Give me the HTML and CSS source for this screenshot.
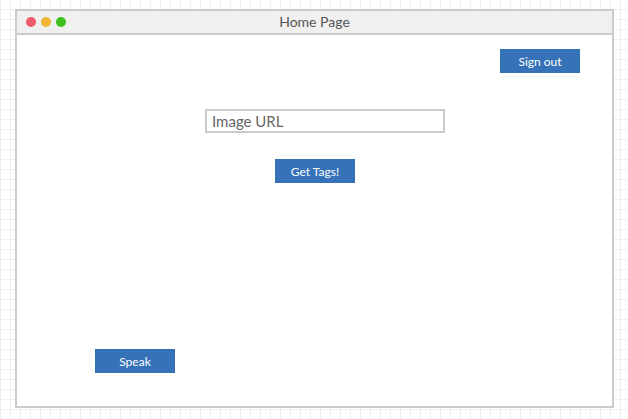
FILE: index.html
```html
<!DOCTYPE html>
<html>
<head>
<meta charset="utf-8">
<link rel="stylesheet" href="styles.css">
</head>
<body>
<div class="window">
  <div class="titlebar">
    <div class="dots">
      <span class="dot red"></span>
      <span class="dot yellow"></span>
      <span class="dot green"></span>
    </div>
    <div class="title">Home Page</div>
  </div>
  <div class="content">
    <div class="top-row">
      <button class="btn">Sign out</button>
    </div>
    <div class="url-row">
      <input class="url" type="text" placeholder="Image URL">
    </div>
    <div class="tags-row">
      <button class="btn">Get Tags!</button>
    </div>
    <div class="speak-row">
      <button class="btn">Speak</button>
    </div>
  </div>
</div>
</body>
</html>
```

FILE: styles.css
```css
html, body {
  margin: 0;
  padding: 0;
  width: 628px;
  height: 419px;
  overflow: hidden;
}
body {
  background-color: #fff;
  background-image:
    linear-gradient(to right, #efefef 1px, transparent 1px),
    linear-gradient(to bottom, transparent 9px, #efefef 9px);
  background-size: 10px 10px;
  font-family: Lato, "Open Sans", sans-serif;
  padding: 9px 0 0 15px;
  box-sizing: border-box;
}
.window {
  width: 599px;
  height: 399px;
  box-sizing: border-box;
  border: 2px solid #cbcbcb;
  background: #fff;
  display: flex;
  flex-direction: column;
}
.titlebar {
  height: 24px;
  box-sizing: border-box;
  background: #f0f0f0;
  border-bottom: 2px solid #cbcbcb;
  position: relative;
  display: flex;
  align-items: center;
  justify-content: center;
}
.dots {
  position: absolute;
  left: 9px;
  top: 6px;
  display: flex;
  gap: 5px;
}
.dot {
  width: 10px;
  height: 10px;
  border-radius: 50%;
  display: block;
}
.red { background: #ef5b6a; }
.yellow { background: #f1b732; }
.green { background: #3dbf1e; }
.title {
  font-size: 14px;
  color: #555;
  line-height: 22px;
}
.content {
  flex: 1;
  display: flex;
  flex-direction: column;
  padding: 14px 32px 33px 78px;
}
.btn {
  width: 80px;
  height: 24px;
  border: none;
  background: #3572b7;
  color: #fff;
  font-family: Lato, "Open Sans", sans-serif;
  font-size: 12px;
  padding: 0;
  margin: 0;
  display: block;
}
.top-row {
  display: flex;
  justify-content: flex-end;
}
.url-row {
  margin-top: 36px;
  padding-left: 110px;
}
.url {
  display: block;
  width: 240px;
  height: 24px;
  box-sizing: border-box;
  border: 2px solid #cbcbcb;
  padding: 0 5px;
  margin: 0;
  font-family: Lato, "Open Sans", sans-serif;
  font-size: 15px;
  color: #555;
  outline: none;
}
.url::placeholder {
  color: #666;
}
.tags-row {
  margin-top: 26px;
  padding-left: 180px;
}
.speak-row {
  margin-top: auto;
}
```
